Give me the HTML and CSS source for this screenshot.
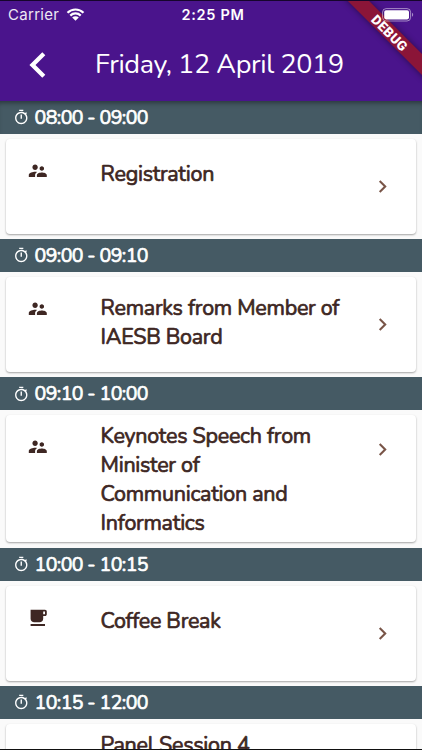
FILE: index.html
```html
<!DOCTYPE html>
<html lang="en">

<head>
    <meta charset="UTF-8">
    <meta name="viewport" content="width=device-width, initial-scale=1.0">
    <title>Friday, 12 April 2019</title>
    <link rel="stylesheet" href="styles.css">
</head>

<body>
    <svg class="sprite" width="0" height="0">
        <symbol id="timer" viewBox="0 0 24 24">
            <path d="M15 1H9v2h6V1zm-4 13h2V8h-2v6zm8.03-6.61l1.42-1.42c-.43-.51-.9-.99-1.41-1.41l-1.42 1.42C16.07 4.74 14.12 4 12 4c-4.97 0-9 4.03-9 9s4.02 9 9 9 9-4.03 9-9c0-2.12-.74-4.07-1.97-5.61zM12 20c-3.87 0-7-3.13-7-7s3.13-7 7-7 7 3.13 7 7-3.13 7-7 7z" />
        </symbol>
        <symbol id="people" viewBox="0 0 24 24">
            <path d="M16.5 12c1.38 0 2.49-1.12 2.49-2.5S17.88 7 16.5 7C15.12 7 14 8.12 14 9.5s1.12 2.5 2.5 2.5zM9 11c1.66 0 2.99-1.34 2.99-3S10.66 5 9 5C7.34 5 6 6.34 6 8s1.34 3 3 3zm7.5 3c-1.83 0-5.5.92-5.5 2.75V19h11v-2.25c0-1.83-3.67-2.75-5.5-2.75zM9 13c-2.33 0-7 1.17-7 3.5V19h7v-2.25c0-.85.33-2.34 2.37-3.47C10.5 13.1 9.66 13 9 13z" />
        </symbol>
        <symbol id="cup" viewBox="0 0 24 24">
            <path d="M20 3H4v10c0 2.21 1.79 4 4 4h6c2.21 0 4-1.79 4-4v-3h2c1.11 0 2-.89 2-2V5c0-1.11-.89-2-2-2zm0 5h-2V5h2v3zM4 19h16v2H4z" />
        </symbol>
        <symbol id="chevron" viewBox="0 0 24 24">
            <path d="M8.59 16.59L13.17 12 8.59 7.41 10 6l6 6-6 6z" />
        </symbol>
    </svg>

    <div class="screen">
        <header class="app-bar">
            <div class="status-bar">
                <div class="carrier">
                    <span>Carrier</span>
                    <svg class="wifi" viewBox="0 0 18 13">
                        <path d="M1 4.8a11.4 11.4 0 0 1 16 0M3.8 7.6a7.4 7.4 0 0 1 10.4 0" />
                        <path class="dot" d="M9 12.8L5.7 9.5a4.7 4.7 0 0 1 6.6 0z" />
                    </svg>
                </div>
                <span class="clock">2:25 PM</span>
                <svg class="battery" viewBox="0 0 32 14">
                    <rect class="shell" x=".6" y=".6" width="28" height="12.4" rx="3.6" />
                    <rect x="2.2" y="2.2" width="24.8" height="9.2" rx="1.8" />
                    <path class="cap" d="M30 4.8c1.6.5 1.6 3.5 0 4z" />
                </svg>
            </div>
            <div class="toolbar">
                <svg class="back" viewBox="7 5 10 14">
                    <path d="M15.41 7.41L14 6l-6 6 6 6 1.41-1.41L10.83 12z" />
                </svg>
                <h1>Friday, 12 April 2019</h1>
            </div>
            <div class="debug-banner">DEBUG</div>
        </header>

        <main class="schedule">
            <section>
                <h2><svg><use href="#timer" /></svg><span>08:00 - 09:00</span></h2>
                <div class="card">
                    <svg class="type"><use href="#people" /></svg>
                    <p>Registration</p>
                    <svg class="more"><use href="#chevron" /></svg>
                </div>
            </section>
            <section>
                <h2><svg><use href="#timer" /></svg><span>09:00 - 09:10</span></h2>
                <div class="card two-lines">
                    <svg class="type"><use href="#people" /></svg>
                    <p>Remarks from Member of<br>IAESB Board</p>
                    <svg class="more"><use href="#chevron" /></svg>
                </div>
            </section>
            <section>
                <h2><svg><use href="#timer" /></svg><span>09:10 - 10:00</span></h2>
                <div class="card four-lines">
                    <svg class="type"><use href="#people" /></svg>
                    <p>Keynotes Speech from<br>Minister of<br>Communication and<br>Informatics</p>
                    <svg class="more"><use href="#chevron" /></svg>
                </div>
            </section>
            <section>
                <h2><svg><use href="#timer" /></svg><span>10:00 - 10:15</span></h2>
                <div class="card">
                    <svg class="type"><use href="#cup" /></svg>
                    <p>Coffee Break</p>
                    <svg class="more"><use href="#chevron" /></svg>
                </div>
            </section>
            <section>
                <h2><svg><use href="#timer" /></svg><span>10:15 - 12:00</span></h2>
                <div class="card four-lines">
                    <p class="no-icon">Panel Session 4</p>
                </div>
            </section>
        </main>
    </div>
</body>

</html>
```
FILE: styles.css
```css
* {
    box-sizing: border-box;
}

body {
    margin: 0;
    font-family: Nunito, "Open Sans", sans-serif;
    background-color: #fafafa;
}

.sprite {
    display: block;
}

.screen {
    height: 750px;
    overflow: hidden;
    border-top: 1px solid #16052c;
    border-bottom: 1px solid #111;
}

.app-bar {
    position: relative;
    z-index: 1;
    height: 100px;
    overflow: hidden;
    background-color: #4a148c;
    color: white;
}

.status-bar {
    display: grid;
    grid-template-columns: 1fr auto 1fr;
    align-items: center;
    height: 27px;
    padding: 0 7px 0 8px;
    font-family: Inter, sans-serif;
    font-size: 15px;
}

.carrier {
    display: flex;
    align-items: center;
    gap: 7px;
    letter-spacing: 0.3px;
}

.carrier span {
    opacity: 0.9;
}

.wifi {
    width: 19px;
    height: 13px;
    fill: none;
    stroke: white;
    stroke-width: 2.2;
}

.wifi .dot {
    fill: white;
    stroke: none;
}

.clock {
    padding-left: 3px;
    font-size: 14.5px;
    font-weight: 600;
    letter-spacing: 0.7px;
}

.battery {
    position: relative;
    z-index: 2;
    justify-self: end;
    width: 32px;
    height: 14px;
    margin-right: 1px;
    fill: white;
}

.battery .shell {
    fill: none;
    stroke: rgba(255, 255, 255, 0.5);
}

.battery .cap {
    fill: rgba(255, 255, 255, 0.5);
}

.toolbar {
    display: flex;
    align-items: center;
    height: 73px;
    padding-left: 27px;
}

.back {
    width: 22px;
    height: 30px;
    fill: white;
}

h1 {
    margin: 0 0 0 46px;
    font-size: 27px;
    font-weight: 400;
    letter-spacing: -0.37px;
    line-height: 36px;
    white-space: nowrap;
}

.debug-banner {
    position: absolute;
    top: 24px;
    left: 330px;
    width: 120px;
    height: 15px;
    transform: rotate(45deg);
    background-color: #8b1538;
    box-shadow: 0 0 6px rgba(0, 0, 0, 0.45);
    font-family: Roboto, sans-serif;
    font-size: 13.5px;
    font-weight: 900;
    letter-spacing: 0.3px;
    line-height: 16px;
    text-align: center;
}

h2 {
    display: flex;
    align-items: center;
    gap: 5px;
    height: 33px;
    margin: 0;
    padding-left: 13px;
    background-color: #455a64;
    color: white;
    font-size: 19.5px;
    font-weight: 400;
    letter-spacing: -0.57px;
    white-space: nowrap;
    -webkit-text-stroke: 0.7px white;
}

h2 svg {
    width: 16.5px;
    height: 16.5px;
    fill: white;
}

section:first-child h2 {
    box-shadow: inset 0 5px 5px -3px rgba(0, 0, 0, 0.4);
}

.card {
    display: flex;
    align-items: flex-start;
    height: 95px;
    margin: 5px 6px 5.2px;
    padding: 21px 21px 0;
    border-radius: 4px;
    background-color: white;
    box-shadow: 0 1px 2px rgba(0, 0, 0, 0.35);
}

.card p {
    flex: 1;
    margin: 0 0 0 52px;
    color: #3e2723;
    font-size: 21.5px;
    font-weight: 400;
    letter-spacing: -0.27px;
    line-height: 29px;
    white-space: nowrap;
    -webkit-text-stroke: 0.7px #3e2723;
}

.type {
    width: 21.6px;
    height: 21.6px;
    fill: #3e2723;
}

.more {
    width: 25px;
    height: 25px;
    margin-top: 14px;
    fill: #795548;
}

.card.two-lines p {
    margin-top: -4px;
}

.four-lines {
    height: 127px;
}

.card.four-lines p {
    margin-top: -14px;
}

.four-lines .more {
    margin-top: 1px;
}

.card .no-icon {
    margin-left: 73.6px;
}
```
